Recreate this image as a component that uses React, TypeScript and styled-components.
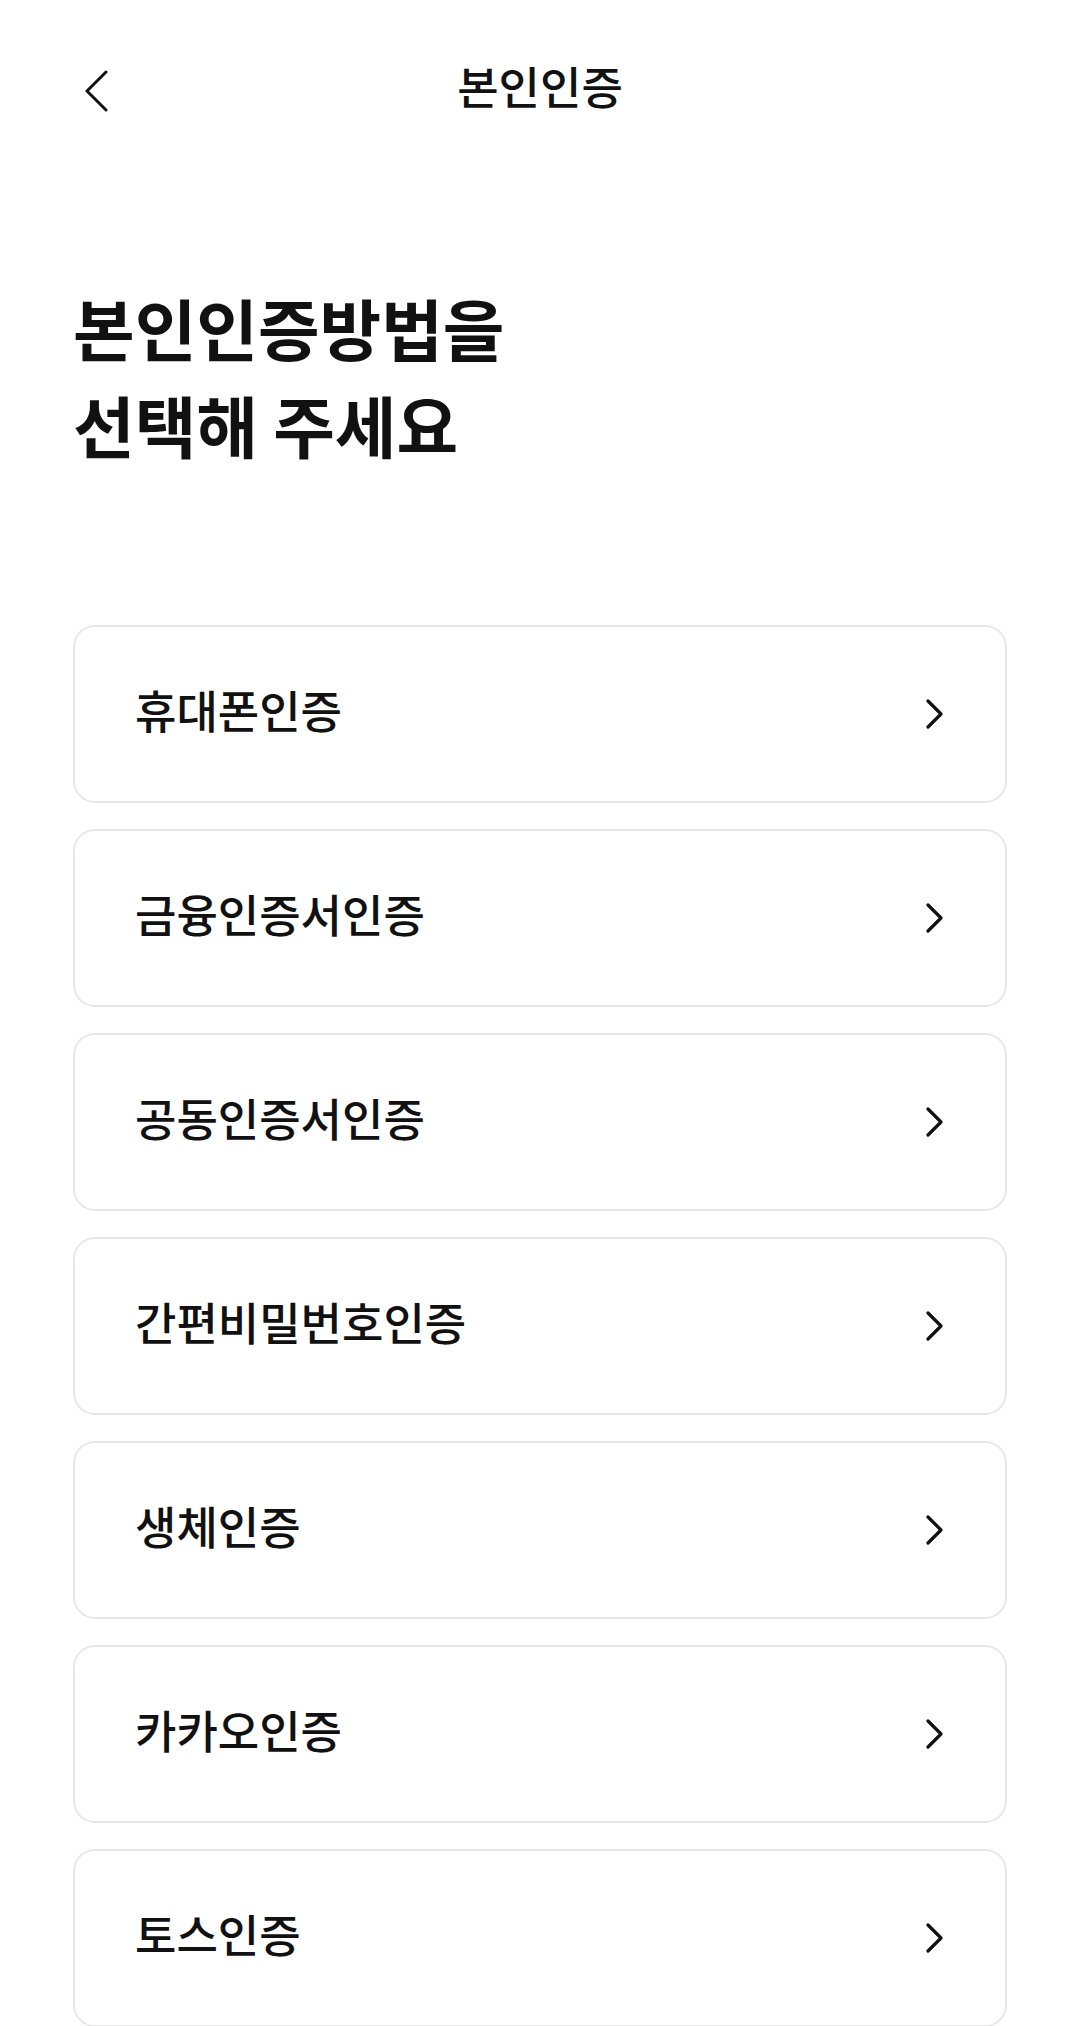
import React from 'react';
import styled, { createGlobalStyle } from 'styled-components';

const colors = {
  text: '#111111',
  border: '#e8e8ea',
  background: '#ffffff',
};

const methods = [
  '휴대폰인증',
  '금융인증서인증',
  '공동인증서인증',
  '간편비밀번호인증',
  '생체인증',
  '카카오인증',
  '토스인증',
];

const GlobalStyle = createGlobalStyle`
  html, body {
    margin: 0;
    padding: 0;
    background: ${colors.background};
  }
  body {
    font-family: "Noto Sans CJK KR", "Noto Sans", sans-serif;
    color: ${colors.text};
  }
  * {
    box-sizing: border-box;
  }
`;

const Page = styled.div`
  width: 1080px;
  height: 2026px;
  overflow: hidden;
  display: flex;
  flex-direction: column;
`;

const Header = styled.header`
  height: 170px;
  flex-shrink: 0;
  display: grid;
  grid-template-columns: 1fr auto 1fr;
  align-items: center;
`;

const BackButton = styled.button`
  justify-self: start;
  margin: 12px 0 0 82px;
  width: 28px;
  height: 44px;
  padding: 0;
  border: 0;
  background: none;
  display: flex;
  align-items: center;
  justify-content: center;
  cursor: pointer;
`;

const Title = styled.h1`
  margin: 0;
  font-size: 45px;
  font-weight: 500;
  line-height: 1;
`;

const Content = styled.main`
  flex-shrink: 0;
  padding: 108px 73px 0;
  display: flex;
  flex-direction: column;
`;

const Heading = styled.h2`
  margin: 0 0 153px;
  font-size: 67px;
  font-weight: 700;
  line-height: 97px;
`;

const MethodList = styled.ul`
  list-style: none;
  margin: 0;
  padding: 0;
  display: flex;
  flex-direction: column;
  gap: 26px;
`;

const MethodItem = styled.li`
  height: 178px;
  flex-shrink: 0;
  border: 2px solid ${colors.border};
  border-radius: 22px;
  padding: 0 61px 0 60px;
  display: flex;
  align-items: center;
  justify-content: space-between;
  cursor: pointer;
`;

const MethodLabel = styled.span`
  font-size: 45px;
  font-weight: 500;
  line-height: 1;
  margin-top: -9px;
`;

const ChevronLeft = () => (
  <svg width="24" height="42" viewBox="0 0 24 42" fill="none">
    <polyline
      points="22,2 3,21 22,40"
      stroke={colors.text}
      strokeWidth="3"
      strokeLinecap="round"
      strokeLinejoin="round"
    />
  </svg>
);

const ChevronRight = () => (
  <svg width="18" height="30" viewBox="0 0 18 30" fill="none">
    <polyline
      points="2,2 15,15 2,28"
      stroke={colors.text}
      strokeWidth="3.2"
      strokeLinecap="round"
      strokeLinejoin="round"
    />
  </svg>
);

const App = () => (
  <>
    <GlobalStyle />
    <Page>
      <Header>
        <BackButton aria-label="뒤로가기">
          <ChevronLeft />
        </BackButton>
        <Title>본인인증</Title>
        <span />
      </Header>

      <Content>
        <Heading>
          본인인증방법을
          <br />
          선택해 주세요
        </Heading>

        <MethodList>
          {methods.map(method => (
            <MethodItem key={method}>
              <MethodLabel>{method}</MethodLabel>
              <ChevronRight />
            </MethodItem>
          ))}
        </MethodList>
      </Content>
    </Page>
  </>
);

export default App;
